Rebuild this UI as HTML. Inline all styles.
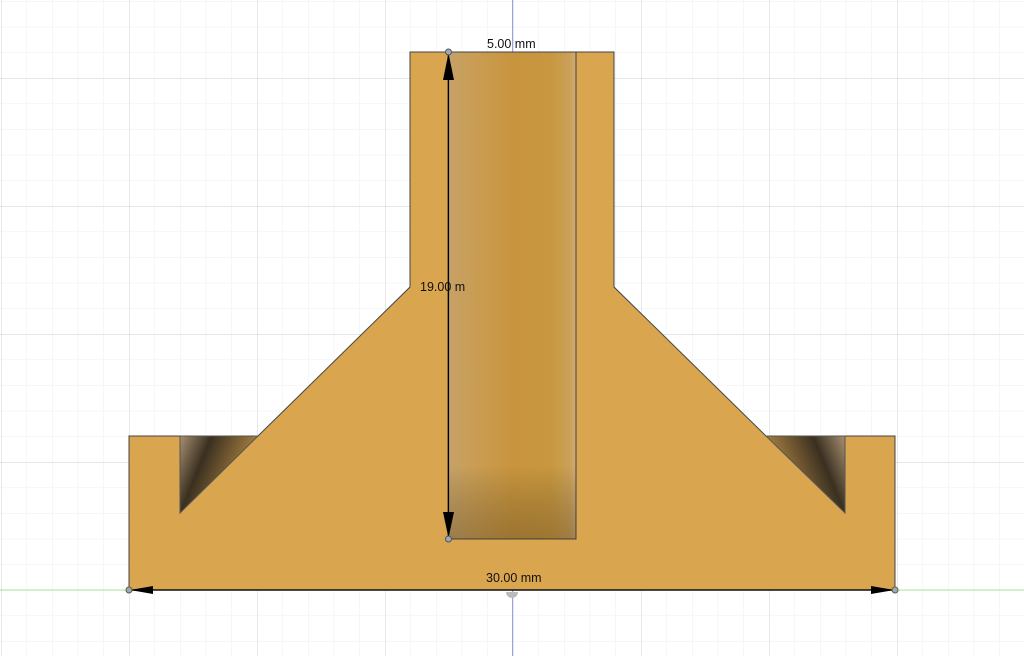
<!DOCTYPE html>
<html><head><meta charset="utf-8"><style>
html,body{margin:0;padding:0;background:#fff;}
svg{display:block}
text{font-family:"Liberation Sans",sans-serif;font-size:12.5px;fill:#111}
</style></head><body>
<svg width="1024" height="656" viewBox="0 0 1024 656" xmlns="http://www.w3.org/2000/svg">
<defs>
<pattern id="minor" x="1" y="1.2" width="25.6" height="25.6" patternUnits="userSpaceOnUse">
<path d="M0 0V25.6M0 0H25.6" stroke="#ececec" stroke-width="1" fill="none"/>
</pattern>
<pattern id="major" x="1" y="78" width="128" height="128" patternUnits="userSpaceOnUse">
<path d="M0 0V128M0 0H128" stroke="#d8d8d8" stroke-width="1.2" fill="none"/>
</pattern>
<linearGradient id="hole" x1="0" y1="0" x2="1" y2="0">
<stop offset="0" stop-color="#c6a268"/>
<stop offset="0.25" stop-color="#c99c50"/>
<stop offset="0.5" stop-color="#c8953e"/>
<stop offset="0.8" stop-color="#c8973f"/>
<stop offset="0.95" stop-color="#caa058"/>
<stop offset="1" stop-color="#d2ac70"/>
</linearGradient>
<linearGradient id="holeV" x1="0" y1="0" x2="0" y2="1">
<stop offset="0.85" stop-color="#000" stop-opacity="0"/>
<stop offset="1" stop-color="#3a2a10" stop-opacity="0.3"/>
</linearGradient>
<linearGradient id="notchL" x1="0" y1="0" x2="1" y2="0.4">
<stop offset="0" stop-color="#a89070"/>
<stop offset="0.35" stop-color="#3a3020"/>
<stop offset="1" stop-color="#c09048"/>
</linearGradient>
<linearGradient id="notchR" x1="1" y1="0" x2="0" y2="0.4">
<stop offset="0" stop-color="#a89070"/>
<stop offset="0.35" stop-color="#3a3020"/>
<stop offset="1" stop-color="#c09048"/>
</linearGradient>
</defs>
<rect width="1024" height="656" fill="url(#minor)"/>
<rect width="1024" height="656" fill="url(#major)"/>
<line x1="0" y1="590" x2="1024" y2="590" stroke="#a8e6a0" stroke-width="1"/>
<line x1="512.5" y1="0" x2="512.5" y2="656" stroke="#9aa0f0" stroke-width="1"/>
<path d="M410 52H614V287L766 436H895V590H129V436H258L410 287Z" fill="#d9a54e" stroke="#444" stroke-width="1"/>
<path d="M180 436H258L180 513Z" fill="url(#notchL)" stroke="#555" stroke-width="1"/>
<path d="M845 436H766L845 513Z" fill="url(#notchR)" stroke="#555" stroke-width="1"/>
<rect x="448" y="52" width="128" height="487" fill="url(#hole)" stroke="#444" stroke-width="1"/>
<rect x="448" y="52" width="128" height="487" fill="url(#holeV)"/>
<line x1="448.5" y1="60" x2="448.5" y2="530" stroke="#000" stroke-width="1.2"/>
<path d="M448.5 53L443 80H454Z M448.5 538L443 512H454Z" fill="#000"/>
<line x1="130" y1="590" x2="894" y2="590" stroke="#111" stroke-width="1.5"/>
<path d="M130 590L153 586V594Z M894 590L871 586V594Z" fill="#000"/>
<circle cx="448.5" cy="52" r="3" fill="#9ab" stroke="#555"/>
<circle cx="448.5" cy="539" r="3" fill="#9ab" stroke="#555"/>
<circle cx="129" cy="590" r="3" fill="#9ab" stroke="#6a5a30"/>
<circle cx="895" cy="590" r="3" fill="#9ab" stroke="#6a5a30"/>
<path d="M506 592A6 6 0 0 0 518 592Z" fill="#bbb"/>
<text x="487" y="48">5.00 mm</text>
<text x="420" y="291">19.00 m</text>
<text x="486" y="582">30.00 mm</text>
</svg>
</body></html>
